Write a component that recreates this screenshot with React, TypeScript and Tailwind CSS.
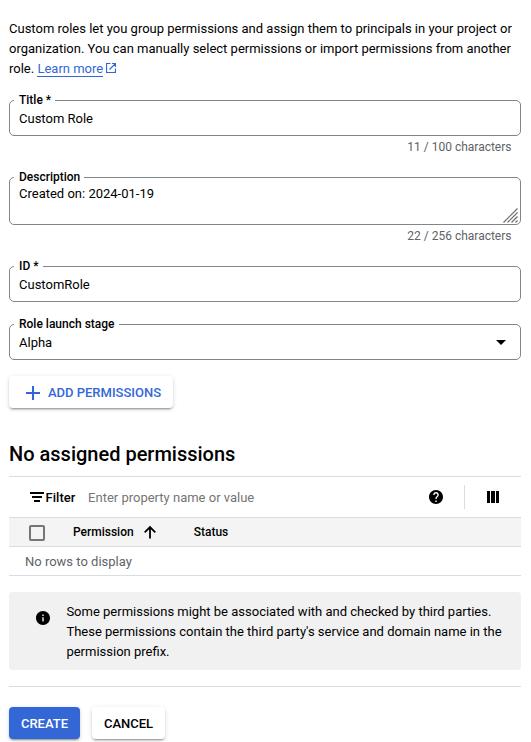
import React from "react";

type FieldProps = {
  label: string;
  value: string;
  tall?: boolean;
  children?: React.ReactNode;
};

function Field({ label, value, tall, children }: FieldProps) {
  return (
    <div
      className={`relative flex justify-between rounded-[5px] border border-[#80868b] pl-[9px] ${
        tall ? "h-12 items-start pt-[6px]" : "h-9 items-center"
      }`}
    >
      <span className="absolute -top-[9px] left-1 bg-white pl-[5px] pr-1 text-[12px] leading-4 font-medium">
        {label}
      </span>
      <span className={tall ? "leading-5" : "pt-[2px] leading-5"}>{value}</span>
      {children}
    </div>
  );
}

function Counter({ children }: { children: React.ReactNode }) {
  return (
    <div className="mt-[3px] h-4 pr-[9.5px] text-right text-[12px] leading-4 text-[#5f6368]">
      {children}
    </div>
  );
}

const raised =
  "flex h-8 items-center justify-center rounded-[4px] pt-[2px] text-[13px] font-medium shadow-[0_3px_1px_-2px_rgba(0,0,0,0.2),0_2px_2px_0_rgba(0,0,0,0.14),0_1px_5px_0_rgba(0,0,0,0.12)]";

export default function App() {
  return (
    <main className="h-[742px] w-[531px] overflow-hidden bg-white pr-[10px] pl-[9px] pt-[19px] font-['Roboto',sans-serif] text-[13px] text-black">
      <p className="h-[60px] leading-5 whitespace-nowrap">
        Custom roles let you group permissions and assign them to principals in your project or
        <br />
        organization. You can manually select permissions or import permissions from another
        <br />
        role.{" "}
        <a className="inline-block h-[18px] border-b border-[#3367d6] text-[#3367d6]">Learn more</a>
        <svg className="ml-[3px] inline-block align-[-1px]" width="10" height="11" viewBox="0 0 10 11" fill="none" stroke="#3367d6" strokeWidth="1.2">
          <path d="M4.5 .5H.5v9h9v-4M6 .5h3.5V4M9.5 .5L3.5 6.5" />
        </svg>
      </p>

      <div className="mt-[21px]">
        <Field label="Title *" value="Custom Role" />
        <Counter>11 / 100 characters</Counter>
      </div>
      <div className="mt-[22px]">
        <Field label="Description" value="Created on: 2024-01-19" tall>
          <svg className="mt-[24px] mr-[2px]" width="15" height="15" viewBox="0 0 15 15" stroke="#6e6e6e" strokeWidth="1.2" fill="none">
            <path d="M.5 14.5l14-14M4.5 14.5l10-10M8.5 14.5l6-6M12.5 14.5l2-2" />
          </svg>
        </Field>
        <Counter>22 / 256 characters</Counter>
      </div>
      <div className="mt-[22px]">
        <Field label="ID *" value="CustomRole" />
      </div>
      <div className="mt-[22px]">
        <Field label="Role launch stage" value="Alpha">
          <svg className="mr-[14px]" width="10" height="5" viewBox="0 0 10 5">
            <path d="M0 0h10L5 5z" />
          </svg>
        </Field>
      </div>

      <button className={`${raised} mt-4 w-[164px] bg-white pl-[5px] text-[#3367d6]`}>
        <svg className="mr-2" width="14" height="14" viewBox="0 0 14 14" fill="#3367d6">
          <path d="M6 0h2v6h6v2H8v6H6V8H0V6h6z" />
        </svg>
        ADD PERMISSIONS
      </button>

      <h2 className="mt-8 text-[20px] leading-7 font-medium">No assigned permissions</h2>

      <section className="mt-2 border-y border-[#dadce0]">
        <div className="flex h-10 items-center">
          <svg className="ml-[21px]" width="14" height="10" viewBox="0 0 14 10">
            <path d="M0 0h14v2H0zM2 4h10v2H2zM4 8h6v2H4z" />
          </svg>
          <span className="ml-[1.6px] pt-[2px] font-medium">Filter</span>
          <span className="ml-[12.8px] pt-[2px] text-[#757575]">Enter property name or value</span>
          <svg className="ml-auto" width="14" height="14" viewBox="2 2 20 20">
            <path d="M12 2C6.48 2 2 6.48 2 12s4.48 10 10 10 10-4.48 10-10S17.52 2 12 2zm1 17h-2v-2h2v2zm2.07-7.75l-.9.92C13.45 12.9 13 13.5 13 15h-2v-.5c0-1.1.45-2.1 1.17-2.83l1.24-1.26c.37-.36.59-.86.59-1.41 0-1.1-.9-2-2-2s-2 .9-2 2H8c0-2.21 1.79-4 4-4s4 1.79 4 4c0 .88-.36 1.68-.93 2.25z" />
          </svg>
          <div className="ml-[21px] h-6 w-px bg-[#dadce0]" />
          <svg className="mr-[22px] ml-[22px]" width="12" height="12" viewBox="0 0 12 12">
            <path d="M0 0h3v12H0zM4 0h4v12H4zM9 0h3v12H9z" />
          </svg>
        </div>
        <div className="flex h-[30px] items-center border-y border-[#dadce0] bg-[#f4f4f4] text-[12px] font-medium">
          <span className="mt-[2px] ml-5 size-4 rounded-[2px] border-2 border-[#757575]" />
          <span className="ml-7">Permission</span>
          <svg className="ml-[10px]" width="12" height="14" viewBox="0 0 12 14" fill="none" stroke="black" strokeWidth="1.8">
            <path d="M6 13.5V2M.7 7.3L6 2l5.3 5.3" />
          </svg>
          <span className="ml-[38px]">Status</span>
        </div>
        <div className="flex h-7 items-center pt-[2px] pl-4 text-[#5f6368]">No rows to display</div>
      </section>

      <aside className="mt-4 flex h-[78px] rounded-[4px] bg-[#f1f1f1] pt-[10px] leading-5">
        <svg className="mt-[9px] ml-[27px] shrink-0" width="14" height="14" viewBox="2 2 20 20">
          <path d="M12 2C6.48 2 2 6.48 2 12s4.48 10 10 10 10-4.48 10-10S17.52 2 12 2zm1 15h-2v-6h2v6zm0-8h-2V7h2v2z" />
        </svg>
        <p className="ml-[16.4px] whitespace-nowrap">
          Some permissions might be associated with and checked by third parties.
          <br />
          These permissions contain the third party's service and domain name in the
          <br />
          permission prefix.
        </p>
      </aside>

      <div className="mt-4 flex gap-3 border-t border-[#dadce0] pt-5">
        <button className={`${raised} w-[71px] bg-[#3367d6] text-white`}>CREATE</button>
        <button className={`${raised} w-[73px] bg-white`}>CANCEL</button>
      </div>
    </main>
  );
}
